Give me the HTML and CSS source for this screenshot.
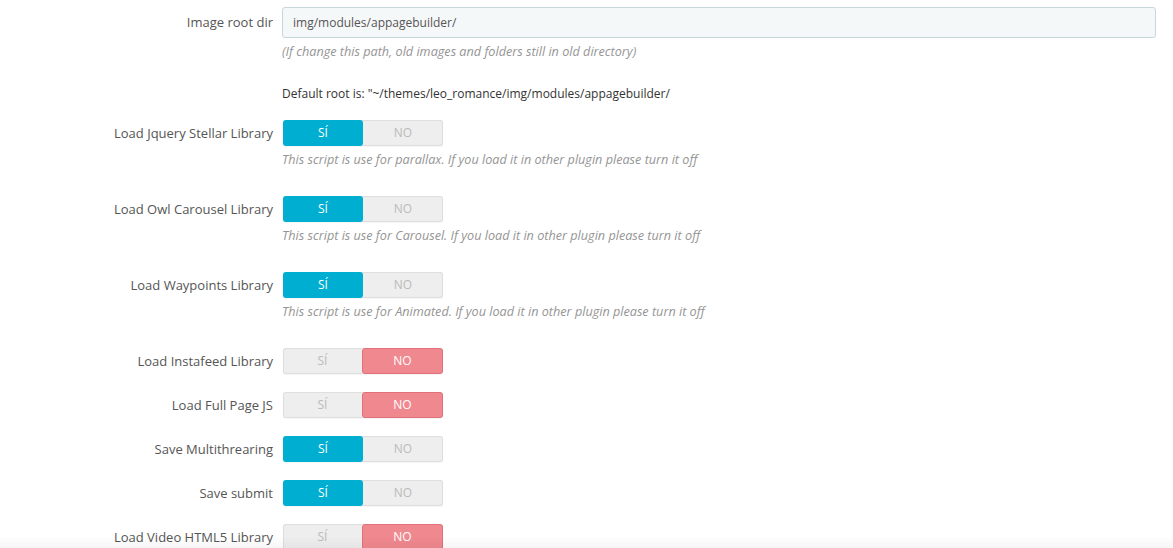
FILE: index.html
```html
<!DOCTYPE html>
<html>
<head>
  <title>Configuración</title>
  <link rel="stylesheet" href="styles.css">
</head>
<body>
  <div class="form">
    <div class="form-group">
      <label class="control-label input-label">Image root dir</label>
      <div class="control">
        <input type="text" class="form-control" value="img/modules/appagebuilder/">
        <p class="help-block">(If change this path, old images and folders still in old directory)</p>
      </div>
    </div>

    <div class="form-group default-root">
      <span></span>
      <div class="control">Default root is: "~/themes/leo_romance/img/modules/appagebuilder/</div>
    </div>

    <div class="form-group">
      <label class="control-label">Load Jquery Stellar Library</label>
      <div class="control">
        <span class="switch on"><span class="yes">SÍ</span><span class="no">NO</span></span>
        <p class="help-block">This script is use for parallax. If you load it in other plugin please turn it off</p>
      </div>
    </div>

    <div class="form-group">
      <label class="control-label">Load Owl Carousel Library</label>
      <div class="control">
        <span class="switch on"><span class="yes">SÍ</span><span class="no">NO</span></span>
        <p class="help-block">This script is use for Carousel. If you load it in other plugin please turn it off</p>
      </div>
    </div>

    <div class="form-group">
      <label class="control-label">Load Waypoints Library</label>
      <div class="control">
        <span class="switch on"><span class="yes">SÍ</span><span class="no">NO</span></span>
        <p class="help-block">This script is use for Animated. If you load it in other plugin please turn it off</p>
      </div>
    </div>

    <div class="form-group">
      <label class="control-label">Load Instafeed Library</label>
      <div class="control">
        <span class="switch off"><span class="yes">SÍ</span><span class="no">NO</span></span>
      </div>
    </div>

    <div class="form-group">
      <label class="control-label">Load Full Page JS</label>
      <div class="control">
        <span class="switch off"><span class="yes">SÍ</span><span class="no">NO</span></span>
      </div>
    </div>

    <div class="form-group">
      <label class="control-label">Save Multithrearing</label>
      <div class="control">
        <span class="switch on"><span class="yes">SÍ</span><span class="no">NO</span></span>
      </div>
    </div>

    <div class="form-group">
      <label class="control-label">Save submit</label>
      <div class="control">
        <span class="switch on"><span class="yes">SÍ</span><span class="no">NO</span></span>
      </div>
    </div>

    <div class="form-group">
      <label class="control-label">Load Video HTML5 Library</label>
      <div class="control">
        <span class="switch off"><span class="yes">SÍ</span><span class="no">NO</span></span>
      </div>
    </div>
  </div>
  <div class="bottom-fade"></div>
</body>
</html>
```

FILE: styles.css
```css
body {
  margin: 0;
  background: #fff;
  font-family: "Open Sans", "Liberation Sans", sans-serif;
  color: #555;
  overflow: hidden;
}

.form {
  padding: 7px 17px 0 0;
}

.form-group {
  display: grid;
  grid-template-columns: 273px 1fr;
  column-gap: 9px;
  align-items: start;
  margin-bottom: 18px;
}

.control-label {
  text-align: right;
  font-size: 13px;
  line-height: 26px;
  color: #555;
}

.input-label {
  line-height: 31px;
}

.form-group:first-child {
  margin-bottom: 15px;
}

.form-group.default-root {
  margin-bottom: 17px;
}

.form-control {
  display: block;
  box-sizing: border-box;
  width: 100%;
  height: 31px;
  padding: 0 10px;
  font-family: inherit;
  font-size: 12px;
  color: #555;
  background: #f5f8f9;
  border: 1px solid #c7d6db;
  border-radius: 3px;
  outline: none;
}

.help-block {
  margin: 4px 0 10px;
  font-size: 12.65px;
  line-height: 18px;
  font-style: italic;
  color: #959595;
}

.default-root .control {
  font-size: 12px;
  line-height: 18px;
  color: #333;
}

.switch {
  display: flex;
  width: 160px;
  height: 26px;
  margin-left: 1px;
  border-radius: 3px;
  background: #eee;
  box-shadow: inset 0 0 0 1px #dedede, 0 1px 1px rgba(0, 0, 0, 0.04);
  font-size: 12px;
}

.switch span {
  flex: 1;
  box-sizing: border-box;
  text-align: center;
  line-height: 26px;
  color: #bbb;
  border-radius: 3px;
}

.switch.on .yes {
  background: #00aed1;
  color: #fff;
}

.switch.off .no {
  background: #f0888f;
  border: 1px solid #e0717a;
  line-height: 24px;
  color: #fff;
}

.bottom-fade {
  position: fixed;
  left: 0;
  right: 0;
  bottom: 0;
  height: 12px;
  background: linear-gradient(rgba(0, 0, 0, 0), rgba(0, 0, 0, 0.035));
  pointer-events: none;
}
```
